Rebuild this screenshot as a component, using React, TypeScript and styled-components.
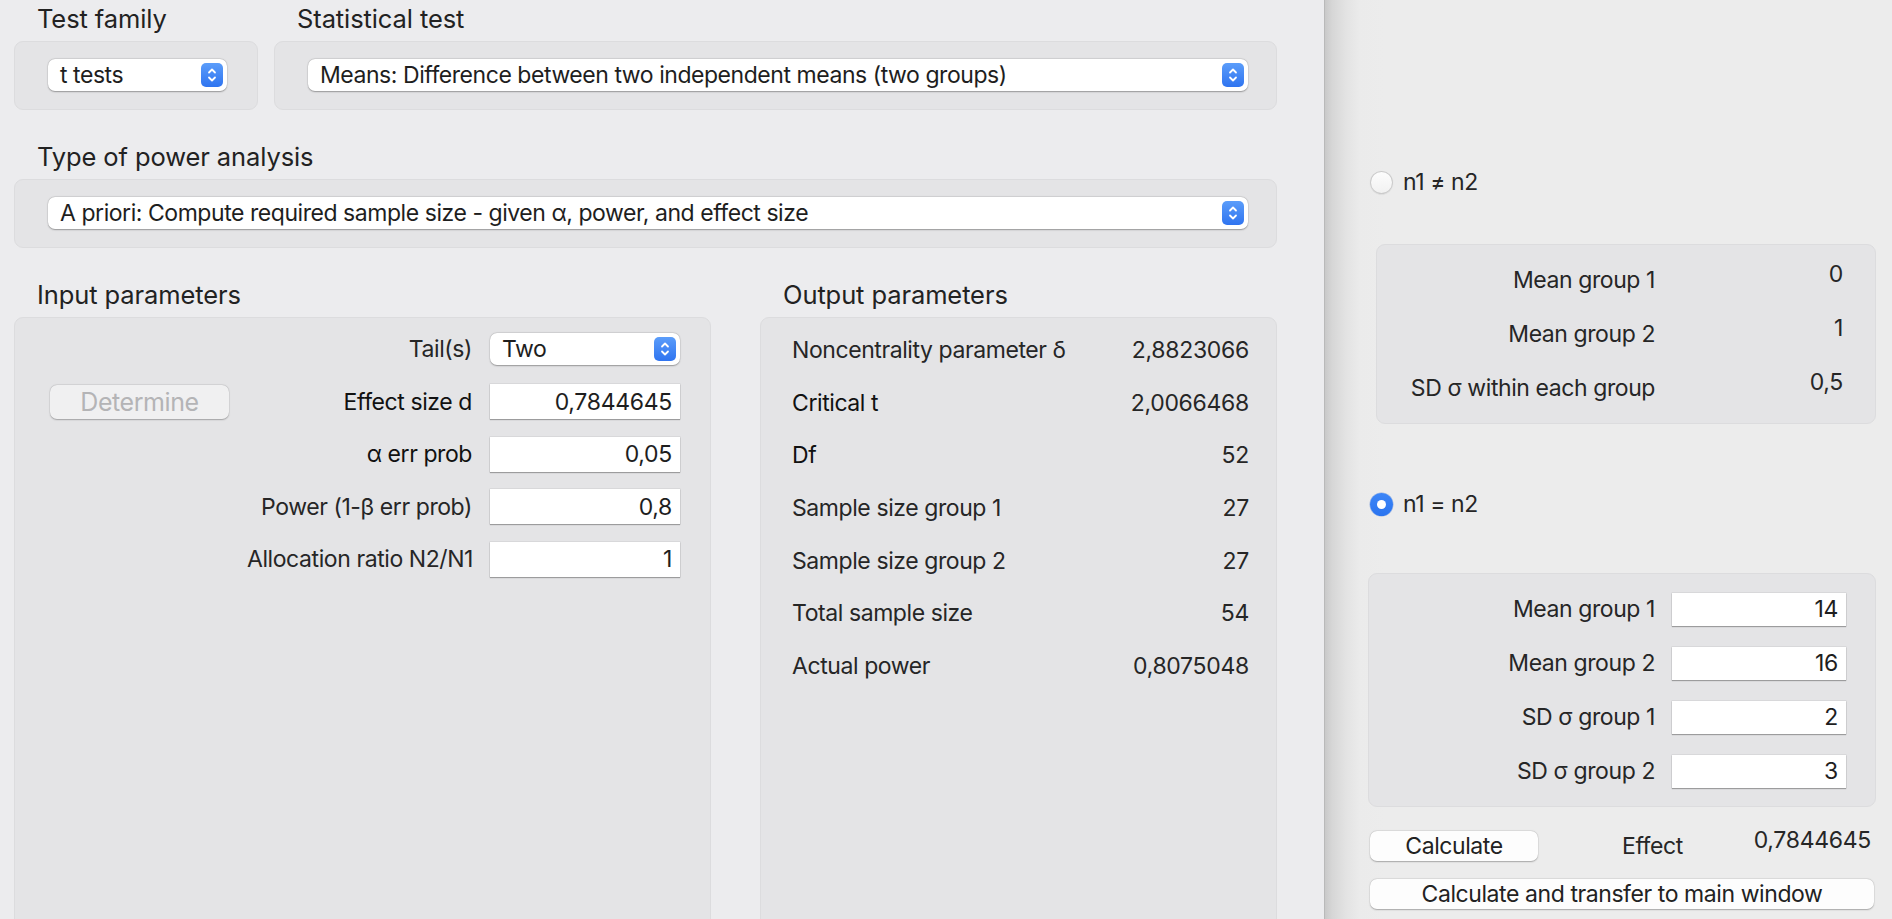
import React from 'react';
import styled, { createGlobalStyle } from 'styled-components';

const Global = createGlobalStyle`
  html, body { margin: 0; padding: 0; overflow: hidden; }
  body {
    font-family: Inter, "Noto Sans", "DejaVu Sans", sans-serif;
    color: #232323;
    -webkit-font-smoothing: antialiased;
  }
  * { box-sizing: border-box; }
`;

const Screen = styled.div`
  display: flex;
  width: 1892px;
  height: 919px;
  overflow: hidden;
`;

const MainWindow = styled.div`
  width: 1324px;
  flex: none;
  height: 919px;
  overflow: hidden;
  background: #ececee;
  padding: 4px 47px 0 14px;
  display: flex;
  flex-direction: column;
  gap: 32px;
`;

const TopRow = styled.div`
  display: grid;
  grid-template-columns: 244px 1fr;
  column-gap: 16px;
`;

const ParamColumns = styled.div`
  display: grid;
  grid-template-columns: 697px 517px;
  column-gap: 49px;
  flex: none;
  height: 700px;
`;

const Section = styled.section`
  display: flex;
  flex-direction: column;
  min-width: 0;
`;

const Title = styled.div`
  font-size: 25.5px;
  line-height: 30px;
  height: 30px;
  padding-left: 23px;
  margin-bottom: 7px;
  color: #222;
  white-space: nowrap;
  letter-spacing: -0.1px;
`;

const GroupBox = styled.div<{ $pad?: string; $grow?: boolean }>`
  background: #e4e4e6;
  border: 1px solid #dcdcde;
  border-radius: 9px;
  padding: ${(p) => p.$pad ?? '17px 29px 18px 33px'};
  ${(p) => (p.$grow ? 'flex: 1;' : '')}
`;

const Popup = styled.div`
  height: 32px;
  background: #fff;
  border-radius: 7px;
  box-shadow: 0 0.5px 1.5px rgba(0, 0, 0, 0.32), 0 0 0 0.5px rgba(0, 0, 0, 0.06);
  display: flex;
  align-items: center;
  justify-content: space-between;
  padding: 0 4px 0 12px;
  font-size: 23px;
  line-height: 28px;
  letter-spacing: -0.45px;
  color: #1e1e1e;
  white-space: nowrap;
`;

const StepperBox = styled.div`
  width: 22px;
  height: 24px;
  border-radius: 5px;
  background: linear-gradient(#5b9dfa, #2f74f0);
  display: flex;
  align-items: center;
  justify-content: center;
  flex: none;
`;

const Stepper = () => (
  <StepperBox>
    <svg width="12" height="18" viewBox="0 0 12 18" fill="none">
      <path d="M3 6.5 L6 3.5 L9 6.5" stroke="#fff" strokeWidth="1.8" strokeLinecap="round" strokeLinejoin="round" />
      <path d="M3 11.5 L6 14.5 L9 11.5" stroke="#fff" strokeWidth="1.8" strokeLinecap="round" strokeLinejoin="round" />
    </svg>
  </StepperBox>
);

const ParamRow = styled.div<{ $cols: string; $h?: number }>`
  display: grid;
  grid-template-columns: ${(p) => p.$cols};
  column-gap: 18px;
  align-items: center;
  height: ${(p) => p.$h ?? 52.5}px;
`;

const Label = styled.div<{ $strong?: boolean; $align?: string }>`
  font-size: 23px;
  line-height: 28px;
  letter-spacing: -0.42px;
  color: ${(p) => (p.$strong ? '#111' : '#262626')};
  text-align: ${(p) => p.$align ?? 'right'};
  white-space: nowrap;
  min-width: 0;
`;

const Value = styled.div<{ $lift?: number; $pr?: number }>`
  font-size: 23px;
  line-height: 28px;
  letter-spacing: -0.3px;
  color: #262626;
  text-align: right;
  white-space: nowrap;
  padding-right: ${(p) => p.$pr ?? 0}px;
  margin-bottom: ${(p) => (p.$lift ?? 0) * 2}px;
`;

const Field = styled.input<{ $h?: number }>`
  height: ${(p) => p.$h ?? 35}px;
  width: 100%;
  border: none;
  outline: none;
  background: #fff;
  box-shadow: 0 1px 1px rgba(0, 0, 0, 0.28), 0 0 0 0.5px rgba(0, 0, 0, 0.1);
  font-family: inherit;
  font-size: 23px;
  letter-spacing: -0.3px;
  color: #1e1e1e;
  text-align: right;
  padding: 0 8px;
`;

const PushButton = styled.button<{ $disabled?: boolean; $h?: number; $w?: string; $fs?: number }>`
  height: ${(p) => p.$h ?? 34}px;
  width: ${(p) => p.$w ?? '100%'};
  border: none;
  border-radius: 7px;
  background: ${(p) => (p.$disabled ? '#f0f0f1' : '#fdfdfd')};
  box-shadow: 0 0.5px 1.5px rgba(0, 0, 0, 0.28), 0 0 0 0.5px rgba(0, 0, 0, 0.05);
  font-family: inherit;
  font-size: ${(p) => p.$fs ?? 23}px;
  letter-spacing: -0.42px;
  line-height: 28px;
  color: ${(p) => (p.$disabled ? '#b4b4b6' : '#222')};
  padding: 0;
  white-space: nowrap;
`;

const InputBox = styled(GroupBox)`
  padding: 5px 30px 0 35px;
`;

const OutputBox = styled(GroupBox)`
  padding: 6px 27px 0 31px;
`;

/* side panel */
const SidePanel = styled.div`
  flex: 1;
  height: 919px;
  background: linear-gradient(
    to right,
    #a9a9a9 0px,
    #c9c9c9 1px,
    #d6d6d6 8px,
    #e3e3e3 22px,
    #ebebeb 36px,
    #ececec 60px
  );
  display: flex;
  flex-direction: column;
  padding: 170px 0 0 0;
`;

const RadioRow = styled.div<{ $mt?: number }>`
  display: flex;
  align-items: center;
  gap: 10px;
  margin: ${(p) => p.$mt ?? 0}px 0 0 46px;
  height: 24px;
`;

const RadioCircle = styled.div<{ $on?: boolean }>`
  width: 23px;
  height: 23px;
  border-radius: 50%;
  flex: none;
  display: flex;
  align-items: center;
  justify-content: center;
  ${(p) =>
    p.$on
      ? 'background: linear-gradient(#3d86f7, #2a74ef); box-shadow: 0 0 0 0.5px rgba(30,90,200,0.4);'
      : 'background: linear-gradient(#fdfdfd, #f1f1f1); box-shadow: inset 0 0 0 1px #cbcbcb, 0 0.5px 1px rgba(0,0,0,0.1);'}
`;

const RadioDot = styled.div`
  width: 9px;
  height: 9px;
  border-radius: 50%;
  background: #fff;
`;

const SideBox = styled(GroupBox)<{ $ml: number; $mt: number }>`
  margin: ${(p) => p.$mt}px 16px 0 ${(p) => p.$ml}px;
  padding: 8px 29px 8px 0;
`;

const SideRow = styled.div`
  display: grid;
  grid-template-columns: 1fr 174px;
  column-gap: 17px;
  align-items: center;
  height: 54px;
`;

const CalcRow = styled.div`
  display: flex;
  align-items: center;
  margin: 24px 21px 0 46px;
  height: 30px;
`;

const EffectLabel = styled(Label)`
  margin-left: 84px;
  flex: 1;
  text-align: left;
`;

const TransferWrap = styled.div`
  margin: 18px 18px 0 46px;
`;

const Radio = ({ on, label, mt }: { on?: boolean; label: string; mt?: number }) => (
  <RadioRow $mt={mt}>
    <RadioCircle $on={on}>{on && <RadioDot />}</RadioCircle>
    <Label $align="left">{label}</Label>
  </RadioRow>
);

const inputs = [
  { label: 'Effect size d', value: '0,7844645', strong: true },
  { label: 'α err prob', value: '0,05', strong: true },
  { label: 'Power (1-β err prob)', value: '0,8' },
  { label: 'Allocation ratio N2/N1', value: '1' },
];

const outputs = [
  { label: 'Noncentrality parameter δ', value: '2,8823066' },
  { label: 'Critical t', value: '2,0066468', strong: true },
  { label: 'Df', value: '52', strong: true },
  { label: 'Sample size group 1', value: '27' },
  { label: 'Sample size group 2', value: '27' },
  { label: 'Total sample size', value: '54' },
  { label: 'Actual power', value: '0,8075048' },
];

const fixedRows = [
  { label: 'Mean group 1', value: '0' },
  { label: 'Mean group 2', value: '1' },
  { label: 'SD σ within each group', value: '0,5' },
];

const fieldRows = [
  { label: 'Mean group 1', value: '14' },
  { label: 'Mean group 2', value: '16' },
  { label: 'SD σ group 1', value: '2' },
  { label: 'SD σ group 2', value: '3' },
];

const inputCols = '179px minmax(0, 1fr) 190px';

export default function App() {
  return (
    <>
      <Global />
      <Screen>
        <MainWindow>
          <TopRow>
            <Section>
              <Title>Test family</Title>
              <GroupBox $pad="17px 30px 18px 33px">
                <Popup>
                  <span>t tests</span>
                  <Stepper />
                </Popup>
              </GroupBox>
            </Section>
            <Section>
              <Title>Statistical test</Title>
              <GroupBox $pad="17px 28px 18px 33px">
                <Popup>
                  <span>Means: Difference between two independent means (two groups)</span>
                  <Stepper />
                </Popup>
              </GroupBox>
            </Section>
          </TopRow>

          <Section>
            <Title>Type of power analysis</Title>
            <GroupBox $pad="17px 28px 18px 33px">
              <Popup>
                <span>A priori: Compute required sample size - given α, power, and effect size</span>
                <Stepper />
              </Popup>
            </GroupBox>
          </Section>

          <ParamColumns>
            <Section>
              <Title>Input parameters</Title>
              <InputBox $grow>
                <ParamRow $cols={inputCols}>
                  <div />
                  <Label>Tail(s)</Label>
                  <Popup>
                    <span>Two</span>
                    <Stepper />
                  </Popup>
                </ParamRow>
                {inputs.map((r, i) => (
                  <ParamRow key={r.label} $cols={inputCols}>
                    {i === 0 ? (
                      <PushButton $disabled $fs={25}>
                        Determine
                      </PushButton>
                    ) : (
                      <div />
                    )}
                    <Label $strong={r.strong}>{r.label}</Label>
                    <Field readOnly defaultValue={r.value} />
                  </ParamRow>
                ))}
              </InputBox>
            </Section>
            <Section>
              <Title>Output parameters</Title>
              <OutputBox $grow>
                {outputs.map((r) => (
                  <ParamRow key={r.label} $cols="1fr auto" $h={52.6}>
                    <Label $align="left" $strong={r.strong}>
                      {r.label}
                    </Label>
                    <Value>{r.value}</Value>
                  </ParamRow>
                ))}
              </OutputBox>
            </Section>
          </ParamColumns>
        </MainWindow>

        <SidePanel>
          <Radio label="n1 ≠ n2" />
          <SideBox $ml={52} $mt={50}>
            {fixedRows.map((r) => (
              <SideRow key={r.label}>
                <Label>{r.label}</Label>
                <Value $lift={6} $pr={3}>
                  {r.value}
                </Value>
              </SideRow>
            ))}
          </SideBox>
          <Radio on label="n1 = n2" mt={68} />
          <SideBox $ml={44} $mt={57}>
            {fieldRows.map((r) => (
              <SideRow key={r.label}>
                <Label>{r.label}</Label>
                <Field $h={33} readOnly defaultValue={r.value} />
              </SideRow>
            ))}
          </SideBox>
          <CalcRow>
            <PushButton $h={30} $w="168px">
              Calculate
            </PushButton>
            <EffectLabel>Effect</EffectLabel>
            <Value $lift={6}>0,7844645</Value>
          </CalcRow>
          <TransferWrap>
            <PushButton $h={30}>Calculate and transfer to main window</PushButton>
          </TransferWrap>
        </SidePanel>
      </Screen>
    </>
  );
}
